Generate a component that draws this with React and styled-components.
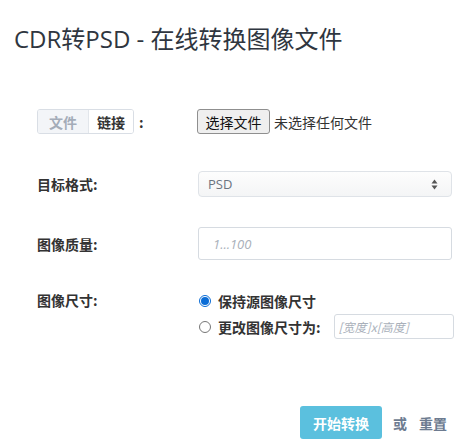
import React, { useState } from 'react';
import styled, { createGlobalStyle } from 'styled-components';

const GlobalStyle = createGlobalStyle`
  body {
    margin: 0;
    background: #fff;
    font-family: "Open Sans", "Noto Sans CJK SC", sans-serif;
    color: #333;
  }
`;

const Page = styled.div`
  width: 472px;
  height: 445px;
  padding: 22px 14px 0;
  box-sizing: border-box;
`;

const Title = styled.h1`
  margin: 0;
  font-size: 24px;
  font-weight: 400;
  line-height: 34px;
  color: #2f3640;
`;

const Form = styled.div`
  padding: 53px 0 0 23px;
  display: flex;
  flex-direction: column;
`;

const Row = styled.div`
  display: flex;
  align-items: ${p => (p.$top ? 'flex-start' : 'center')};
  margin-bottom: ${p => p.$gap || 0}px;
`;

const Label = styled.div`
  width: 161px;
  flex: none;
  font-size: 14px;
  font-weight: 700;
  color: #333;
  font-family: "Noto Sans CJK SC", sans-serif;
  padding-top: ${p => p.$pt || 0}px;
  display: flex;
  align-items: center;
`;

const Tabs = styled.div`
  display: flex;
  border: 1px solid #d9dee5;
  border-radius: 3px;
  overflow: hidden;
  height: 23px;
`;

const Tab = styled.div`
  padding: 0 ${p => (p.$active ? 11 : 8)}px;
  display: flex;
  align-items: center;
  font-size: 14px;
  font-weight: 700;
  background: ${p => (p.$active ? '#f3f5f8' : '#fff')};
  color: ${p => (p.$active ? '#a4acb8' : '#333')};
  border-left: ${p => (p.$active ? 'none' : '1px solid #e2e6eb')};
`;

const Colon = styled.span`
  margin-left: 5px;
  font-weight: 700;
`;

const FileRow = styled.div`
  display: flex;
  align-items: center;
  font-family: "Noto Sans CJK SC", sans-serif;
  font-size: 14px;
  color: #333;
  margin-left: -1px;
`;

const FileButton = styled.button`
  height: 25px;
  width: 73px;
  padding: 0;
  border: 1px solid #8f8f8f;
  border-radius: 3px;
  background: #efefef;
  font-family: "Noto Sans CJK SC", sans-serif;
  font-size: 14px;
  color: #111;
  margin-right: 4px;
`;

const Select = styled.div`
  width: 254px;
  height: 26px;
  box-sizing: border-box;
  border: 1px solid #dfe3e8;
  border-radius: 4px;
  background: linear-gradient(#fdfdfd, #f4f5f6);
  display: flex;
  align-items: center;
  justify-content: space-between;
  padding: 0 13px 0 9px;
  font-size: 13px;
  color: #6b7480;
`;

const Input = styled.div`
  width: ${p => p.$w || 254}px;
  height: ${p => p.$h || 33}px;
  margin-left: ${p => p.$ml || 0}px;
  box-sizing: border-box;
  border: 1px solid #d6dbe1;
  border-radius: 3px;
  background: #fff;
  display: flex;
  align-items: center;
  padding-left: ${p => p.$pl || 14}px;
  font-size: ${p => p.$fs || 13}px;
  font-weight: 400;
  font-style: italic;
  color: #a9b0ba;
`;

const Radios = styled.div`
  display: flex;
  flex-direction: column;
  gap: 1px;
`;

const RadioLine = styled.label`
  display: flex;
  align-items: center;
  height: 25px;
  font-family: "Noto Sans CJK SC", sans-serif;
  font-size: 14px;
  font-weight: 700;
  color: #333;
`;

const RadioDot = styled.span`
  width: 12px;
  height: 12px;
  box-sizing: border-box;
  border-radius: 50%;
  border: ${p => (p.$on ? '1px solid #0a6cd6' : '1px solid #767676')};
  background: #fff;
  margin: 0 7px 0 1px;
  display: flex;
  align-items: center;
  justify-content: center;
  &::after {
    content: '';
    width: 8px;
    height: 8px;
    border-radius: 50%;
    background: ${p => (p.$on ? '#0a6cd6' : 'transparent')};
  }
`;

const Actions = styled.div`
  display: flex;
  align-items: center;
  padding-left: 263px;
  margin-top: 67px;
  font-family: "Noto Sans CJK SC", sans-serif;
`;

const Submit = styled.button`
  width: 82px;
  height: 33px;
  border: none;
  border-radius: 3px;
  background: #5bc0de;
  color: #fff;
  font-family: "Noto Sans CJK SC", sans-serif;
  font-size: 14px;
  font-weight: 700;
`;

const LinkText = styled.span`
  font-size: 14px;
  font-weight: 700;
  color: #6d7b90;
  margin-left: ${p => p.$ml}px;
`;

const Arrows = () => (
  <svg width="7" height="11" viewBox="0 0 7 11">
    <path d="M3.5 0.5 L6.5 4.5 H0.5 Z" fill="#555" />
    <path d="M3.5 10.5 L6.5 6.5 H0.5 Z" fill="#555" />
  </svg>
);

export default function App() {
  const [keep, setKeep] = useState(true);

  return (
    <Page>
      <GlobalStyle />
      <Title>CDR转PSD - 在线转换图像文件</Title>
      <Form>
        <Row $gap={37}>
          <Label>
            <Tabs>
              <Tab $active>文件</Tab>
              <Tab>链接</Tab>
            </Tabs>
            <Colon>:</Colon>
          </Label>
          <FileRow>
            <FileButton>选择文件</FileButton>
            未选择任何文件
          </FileRow>
        </Row>
        <Row $gap={30}>
          <Label>目标格式:</Label>
          <Select>
            PSD
            <Arrows />
          </Select>
        </Row>
        <Row $gap={28}>
          <Label>图像质量:</Label>
          <Input>1...100</Input>
        </Row>
        <Row $top>
          <Label $pt={2}>图像尺寸:</Label>
          <Radios>
            <RadioLine onClick={() => setKeep(true)}>
              <RadioDot $on={keep} />
              保持源图像尺寸
            </RadioLine>
            <RadioLine onClick={() => setKeep(false)}>
              <RadioDot $on={!keep} />
              更改图像尺寸为:
              <Input $w={120} $h={25} $pl={4} $fs={12} $ml={13}>
                [宽度]x[高度]
              </Input>
            </RadioLine>
          </Radios>
        </Row>
        <Actions>
          <Submit>开始转换</Submit>
          <LinkText $ml={11}>或</LinkText>
          <LinkText $ml={12}>重置</LinkText>
        </Actions>
      </Form>
    </Page>
  );
}
